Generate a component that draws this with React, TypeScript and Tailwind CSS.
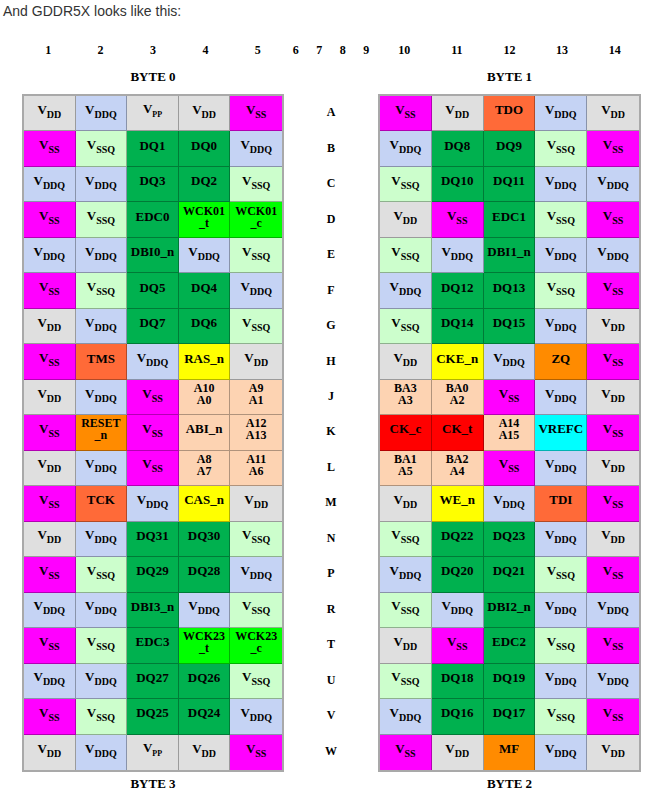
import React from "react";

const LEFT: string[][] = [
  ["VDD", "VDDQ", "VPP", "VDD", "VSS"],
  ["VSS", "VSSQ", "DQ1", "DQ0", "VDDQ"],
  ["VDDQ", "VDDQ", "DQ3", "DQ2", "VSSQ"],
  ["VSS", "VSSQ", "EDC0", "WCK01\n_t", "WCK01\n_c"],
  ["VDDQ", "VDDQ", "DBI0_n", "VDDQ", "VSSQ"],
  ["VSS", "VSSQ", "DQ5", "DQ4", "VDDQ"],
  ["VDD", "VDDQ", "DQ7", "DQ6", "VSSQ"],
  ["VSS", "TMS", "VDDQ", "RAS_n", "VDD"],
  ["VDD", "VDDQ", "VSS", "A10\nA0", "A9\nA1"],
  ["VSS", "RESET\n_n", "VSS", "ABI_n", "A12\nA13"],
  ["VDD", "VDDQ", "VSS", "A8\nA7", "A11\nA6"],
  ["VSS", "TCK", "VDDQ", "CAS_n", "VDD"],
  ["VDD", "VDDQ", "DQ31", "DQ30", "VSSQ"],
  ["VSS", "VSSQ", "DQ29", "DQ28", "VDDQ"],
  ["VDDQ", "VDDQ", "DBI3_n", "VDDQ", "VSSQ"],
  ["VSS", "VSSQ", "EDC3", "WCK23\n_t", "WCK23\n_c"],
  ["VDDQ", "VDDQ", "DQ27", "DQ26", "VSSQ"],
  ["VSS", "VSSQ", "DQ25", "DQ24", "VDDQ"],
  ["VDD", "VDDQ", "VPP", "VDD", "VSS"],
];

const RIGHT: string[][] = [
  ["VSS", "VDD", "TDO", "VDDQ", "VDD"],
  ["VDDQ", "DQ8", "DQ9", "VSSQ", "VSS"],
  ["VSSQ", "DQ10", "DQ11", "VDDQ", "VDDQ"],
  ["VDD", "VSS", "EDC1", "VSSQ", "VSS"],
  ["VSSQ", "VDDQ", "DBI1_n", "VDDQ", "VDDQ"],
  ["VDDQ", "DQ12", "DQ13", "VSSQ", "VSS"],
  ["VSSQ", "DQ14", "DQ15", "VDDQ", "VDD"],
  ["VDD", "CKE_n", "VDDQ", "ZQ", "VSS"],
  ["BA3\nA3", "BA0\nA2", "VSS", "VDDQ", "VDD"],
  ["CK_c", "CK_t", "A14\nA15", "VREFC", "VSS"],
  ["BA1\nA5", "BA2\nA4", "VSS", "VDDQ", "VDD"],
  ["VDD", "WE_n", "VDDQ", "TDI", "VSS"],
  ["VSSQ", "DQ22", "DQ23", "VDDQ", "VDD"],
  ["VDDQ", "DQ20", "DQ21", "VSSQ", "VSS"],
  ["VSSQ", "VDDQ", "DBI2_n", "VDDQ", "VDDQ"],
  ["VDD", "VSS", "EDC2", "VSSQ", "VSS"],
  ["VSSQ", "DQ18", "DQ19", "VDDQ", "VDDQ"],
  ["VDDQ", "DQ16", "DQ17", "VSSQ", "VSS"],
  ["VSS", "VDD", "MF", "VDDQ", "VDD"],
];

const ROWS = ["A", "B", "C", "D", "E", "F", "G", "H", "J", "K", "L", "M", "N", "P", "R", "T", "U", "V", "W"];

const POWER = ["VDD", "VDDQ", "VSS", "VSSQ", "VPP"];

function bgFor(label: string): string {
  if (label === "VDD" || label === "VPP") return "bg-[#dfdfdf]";
  if (label === "VDDQ") return "bg-[#c5d3f4]";
  if (label === "VSS") return "bg-[#ff00ff]";
  if (label === "VSSQ") return "bg-[#ccfecc]";
  if (label.startsWith("DQ") || label.startsWith("EDC") || label.startsWith("DBI")) return "bg-[#00b14f]";
  if (label.startsWith("WCK")) return "bg-[#00ff00]";
  if (["TMS", "TCK", "TDO", "TDI"].includes(label)) return "bg-[#ff6a38]";
  if (label.startsWith("RESET") || label === "ZQ" || label === "MF") return "bg-[#ff8b00]";
  if (label.endsWith("AS_n") || label === "CKE_n" || label === "WE_n") return "bg-[#ffff00]";
  if (label.startsWith("CK_")) return "bg-[#ff0000]";
  if (label === "VREFC") return "bg-[#00ffff]";
  return "bg-[#fdd3b2]";
}

function CellText({ label }: { label: string }) {
  if (POWER.includes(label)) {
    const sub = label.slice(1);
    return (
      <span className="whitespace-nowrap leading-[14px]">
        V
        <span className={`relative top-[4px] ${label === "VPP" ? "text-[8px]" : "text-[10px]"}`}>{sub}</span>
      </span>
    );
  }
  const lines = label.split("\n");
  if (lines.length === 1) return <span className="whitespace-nowrap leading-[14px]">{label}</span>;
  return (
    <span className="flex flex-col items-center text-[12px] leading-[12px]">
      {lines.map((l, i) => (
        <span key={i} className="whitespace-nowrap">{l}</span>
      ))}
    </span>
  );
}

function Grid({ data, width }: { data: string[][]; width: string }) {
  return (
    <div className={`${width} h-[678px] border-2 border-[#a9a9a9] grid grid-cols-5 grid-rows-[repeat(19,minmax(0,1fr))]`}>
      {data.flatMap((row, r) =>
        row.map((label, c) => (
          <div
            key={`${r}-${c}`}
            className={`${bgFor(label)} flex items-center justify-center pb-[6px] text-[13px] font-bold text-black ${c < 4 ? "border-r border-r-black/30" : ""} ${r < 18 ? "border-b border-b-black/30" : ""}`}
          >
            <CellText label={label} />
          </div>
        ))
      )}
    </div>
  );
}

export default function App() {
  const serif = { fontFamily: '"Liberation Serif", "Times New Roman", serif' };
  return (
    <div className="w-[666px] h-[810px] bg-white text-black" style={serif}>
      <div
        className="pl-[3px] pt-[1px] h-[22px] leading-[20px] text-[14px] text-[#333333]"
        style={{ fontFamily: '"Liberation Sans", Arial, sans-serif' }}
      >
        And GDDR5X looks like this:
      </div>
      <div className="flex mt-[19px] h-[18px] items-center text-[12px] font-bold">
        <div className="w-[22px]" />
        <div className="w-[262px] grid grid-cols-5">
          {["1", "2", "3", "4", "5"].map((n) => (
            <div key={n} className="text-center">{n}</div>
          ))}
        </div>
        <div className="w-[94px] grid grid-cols-4">
          {["6", "7", "8", "9"].map((n) => (
            <div key={n} className="text-center">{n}</div>
          ))}
        </div>
        <div className="w-[263px] grid grid-cols-5">
          {["10", "11", "12", "13", "14"].map((n) => (
            <div key={n} className="text-center">{n}</div>
          ))}
        </div>
      </div>
      <div className="flex mt-[9px] h-[18px] items-center text-[13px] font-bold">
        <div className="w-[22px]" />
        <div className="w-[262px] text-center">BYTE 0</div>
        <div className="w-[94px]" />
        <div className="w-[263px] text-center">BYTE 1</div>
      </div>
      <div className="flex mt-[8px]">
        <div className="w-[22px]" />
        <Grid data={LEFT} width="w-[262px]" />
        <div className="w-[94px] h-[678px] py-[2px] grid grid-rows-[repeat(19,minmax(0,1fr))] text-[12px] font-bold">
          {ROWS.map((r) => (
            <div key={r} className="flex items-center justify-center pb-[3px]">{r}</div>
          ))}
        </div>
        <Grid data={RIGHT} width="w-[263px]" />
      </div>
      <div className="flex mt-[3px] h-[18px] items-center text-[13px] font-bold">
        <div className="w-[22px]" />
        <div className="w-[262px] text-center">BYTE 3</div>
        <div className="w-[94px]" />
        <div className="w-[263px] text-center">BYTE 2</div>
      </div>
    </div>
  );
}
